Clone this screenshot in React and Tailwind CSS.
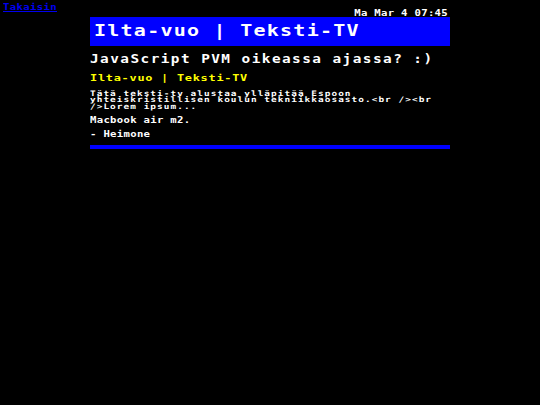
export default function App() {
  return (
    <div className="relative min-h-screen bg-black text-white font-bold font-['DejaVu_Sans_Mono','Liberation_Mono',monospace]">
      {/* back link sits in the corner, over the page */}
      <a href="#" className="absolute left-[3px] top-[2px] origin-left scale-x-125 text-[8.5px] leading-[10px] tracking-[0.28px] text-[#0000ee] underline">
        Takaisin
      </a>

      <div className="mx-auto w-[360px] pt-[9px]">
        <div className="ml-auto mr-[2px] w-[288px] h-[8px] origin-right scale-x-125 text-right text-[8.5px] leading-[8px] tracking-[0.24px]">
          Ma Mar 4 07:45
        </div>

        <header className="h-[29px] bg-[#0000ff] pl-[4px]">
          <div className="w-[288px] origin-left scale-x-125 text-[16px] leading-[27px] tracking-[1px] whitespace-nowrap">
            Ilta-vuo | Teksti-TV
          </div>
        </header>

        <h2 className="mt-[7.3px] w-[288px] origin-left scale-x-125 text-[11.5px] leading-[12px] tracking-[1.16px] whitespace-nowrap">
          JavaScript PVM oikeassa ajassa? :)
        </h2>

        <h3 className="mt-[7.4px] w-[288px] origin-left scale-x-125 text-[9.5px] leading-[10px] tracking-[0.6px] text-[#ffff00]">
          Ilta-vuo | Teksti-TV
        </h3>

        <p className="mt-[8.2px] w-[288px] origin-left scale-x-125 text-[7.5px] leading-[6.33px] tracking-[0.85px]">
          Tätä teksti-tv alustaa ylläpitää Espoon yhteiskristillisen koulun tekniikkaosasto.&lt;br /&gt;&lt;br /&gt;Lorem ipsum...
        </p>

        <p className="mt-[4.8px] w-[288px] origin-left scale-x-125 text-[8.5px] leading-[10px] tracking-[0.24px]">Macbook air m2.</p>
        <p className="mt-[4px] w-[288px] origin-left scale-x-125 text-[8.5px] leading-[10px] tracking-[0.24px]">- Heimone</p>

        <div className="mt-[6.2px] h-[4px] bg-[#0000ff]" />
      </div>
    </div>
  )
}
